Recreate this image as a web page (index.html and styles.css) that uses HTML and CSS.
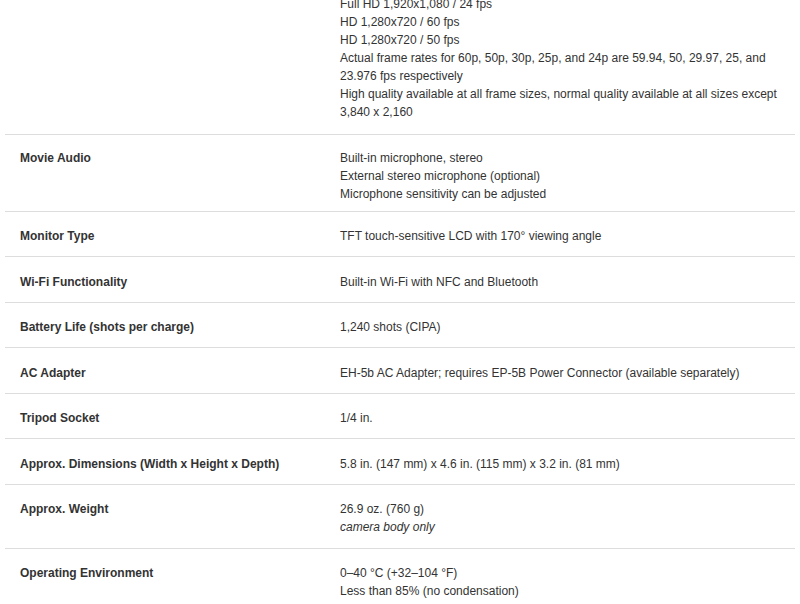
FILE: index.html
```html
<!DOCTYPE html>
<html lang="en">
<head>
<meta charset="utf-8">
<title>Specifications</title>
<link rel="stylesheet" href="styles.css">
</head>
<body>
<div class="specs">
  <div class="row row-first">
    <div class="label"></div>
    <div class="value">
      <div>Full HD 1,920x1,080 / 24 fps</div>
      <div>HD 1,280x720 / 60 fps</div>
      <div>HD 1,280x720 / 50 fps</div>
      <div>Actual frame rates for 60p, 50p, 30p, 25p, and 24p are 59.94, 50, 29.97, 25, and 23.976 fps respectively</div>
      <div>High quality available at all frame sizes, normal quality available at all sizes except 3,840 x 2,160</div>
    </div>
  </div>
  <div class="row row-tight">
    <div class="label">Movie Audio</div>
    <div class="value">
      <div>Built-in microphone, stereo</div>
      <div>External stereo microphone (optional)</div>
      <div>Microphone sensitivity can be adjusted</div>
    </div>
  </div>
  <div class="row">
    <div class="label">Monitor Type</div>
    <div class="value"><div>TFT touch-sensitive LCD with 170° viewing angle</div></div>
  </div>
  <div class="row">
    <div class="label">Wi-Fi Functionality</div>
    <div class="value"><div>Built-in Wi-Fi with NFC and Bluetooth</div></div>
  </div>
  <div class="row">
    <div class="label">Battery Life (shots per charge)</div>
    <div class="value"><div>1,240 shots (CIPA)</div></div>
  </div>
  <div class="row">
    <div class="label">AC Adapter</div>
    <div class="value"><div>EH-5b AC Adapter; requires EP-5B Power Connector (available separately)</div></div>
  </div>
  <div class="row">
    <div class="label">Tripod Socket</div>
    <div class="value"><div>1/4 in.</div></div>
  </div>
  <div class="row">
    <div class="label">Approx. Dimensions (Width x Height x Depth)</div>
    <div class="value"><div>5.8 in. (147 mm) x 4.6 in. (115 mm) x 3.2 in. (81 mm)</div></div>
  </div>
  <div class="row row-two">
    <div class="label">Approx. Weight</div>
    <div class="value">
      <div>26.9 oz. (760 g)</div>
      <div class="note">camera body only</div>
    </div>
  </div>
  <div class="row row-last">
    <div class="label">Operating Environment</div>
    <div class="value">
      <div>0–40 °C (+32–104 °F)</div>
      <div>Less than 85% (no condensation)</div>
    </div>
  </div>
</div>
</body>
</html>
```

FILE: styles.css
```css
html, body {
  margin: 0;
  padding: 0;
  background: #ffffff;
}

body {
  font-family: "Liberation Sans", Arial, sans-serif;
  font-size: 12px;
  line-height: 18px;
  color: #333333;
  overflow: hidden;
}

.specs {
  margin: -5px 5px 0 5px;
}

.row {
  display: grid;
  grid-template-columns: 320px 1fr;
  padding: 15.5px 0 11px 0;
  border-bottom: 1px solid #dddddd;
}

.row-first {
  padding: 0 0 13px 0;
}

.row-tight {
  padding: 13.5px 0 8px 0;
}

.row-two {
  padding-bottom: 11.5px;
}

.row-last {
  border-bottom: none;
}

.label {
  padding: 0 15px;
  font-weight: bold;
  color: #333333;
}

.value {
  padding: 0 15px;
  color: #333333;
}

.note {
  font-style: italic;
}
```
